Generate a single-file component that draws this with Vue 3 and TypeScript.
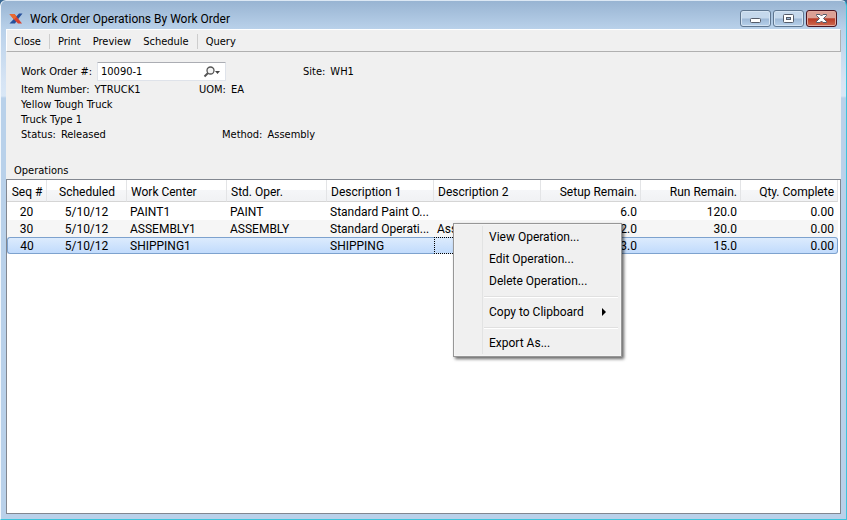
<script setup lang="ts">
import { ref } from 'vue'

interface Operation {
  seq: number
  scheduled: string
  workCenter: string
  stdOper: string
  description1: string
  description2: string
  setup: string
  run: string
  qty: string
}

const workOrder = ref('10090-1')
const selectedSeq = ref(40)

const toolGroups: string[][] = [['Close'], ['Print', 'Preview', 'Schedule'], ['Query']]
const menuGroups: string[][] = [
  ['View Operation...', 'Edit Operation...', 'Delete Operation...'],
  ['Copy to Clipboard'],
  ['Export As...'],
]

const operations: Operation[] = [
  { seq: 20, scheduled: '5/10/12', workCenter: 'PAINT1', stdOper: 'PAINT', description1: 'Standard Paint O...', description2: '', setup: '6.0', run: '120.0', qty: '0.00' },
  { seq: 30, scheduled: '5/10/12', workCenter: 'ASSEMBLY1', stdOper: 'ASSEMBLY', description1: 'Standard Operati...', description2: 'Assembly', setup: '2.0', run: '30.0', qty: '0.00' },
  { seq: 40, scheduled: '5/10/12', workCenter: 'SHIPPING1', stdOper: '', description1: 'SHIPPING', description2: '', setup: '3.0', run: '15.0', qty: '0.00' },
]
</script>

<template>
  <div class="window">
    <header class="titlebar">
      <svg class="logo" width="14" height="12" viewBox="0 0 14 12" aria-hidden="true">
        <path d="M13.500 0.500H10L0.500 10.500H6L8 7.500Z" fill="#27509b" />
        <path d="M0.500 1h5L13 10.500H9L5 6.500Z" fill="#d8432f" />
        <path d="M0.500 1h5L7.500 4 5 6.500Z" fill="#ea6a30" />
      </svg>
      <h1 class="title">Work Order Operations By Work Order</h1>
      <div class="controls">
        <button class="control" type="button" aria-label="Minimize">
          <svg width="13" height="13" viewBox="0 0 13 13"><rect x="1.500" y="6.500" width="10" height="4" rx="1" fill="#fff" stroke="#545b69" /></svg>
        </button>
        <button class="control" type="button" aria-label="Maximize">
          <svg width="13" height="13" viewBox="0 0 13 13"><rect x="1.500" y="2.500" width="10" height="8" rx="1" fill="#fff" stroke="#545b69" /><rect x="4.500" y="5.500" width="4" height="2" fill="#9db8d6" stroke="#545b69" /></svg>
        </button>
        <button class="control control-close" type="button" aria-label="Close window">
          <svg width="13" height="13" viewBox="0 0 13 13"><path d="M1.500 2.500h3.500l1.500 1.500 1.500-1.500h3.500v1L8.500 6.500l3 3v1H8L6.500 9 5 10.500H1.500v-1l3-3-3-3Z" fill="#fff" stroke="#545b69" /></svg>
        </button>
      </div>
    </header>

    <main class="client">
      <nav class="toolbar">
        <div v-for="group in toolGroups" :key="group[0]" class="tool-group">
          <button v-for="tool in group" :key="tool" type="button" class="tool">{{ tool }}</button>
        </div>
      </nav>

      <section class="details">
        <div class="line line-first">
          <div class="entry entry-order">
            <label for="work-order">Work Order #:</label>
            <div class="lookup">
              <input id="work-order" v-model="workOrder" type="text" />
              <button type="button" class="lookup-button" aria-label="Find work order">
                <svg width="18" height="12" viewBox="0 0 18 12">
                  <circle cx="7.500" cy="4.500" r="3.500" fill="#f4f4f4" stroke="#555" stroke-width="1.300" />
                  <path d="M5 7 1.500 10.500" stroke="#555" stroke-width="2" />
                  <path d="M12 5h5l-2.500 3Z" fill="#444" />
                </svg>
              </button>
            </div>
          </div>
          <div class="entry"><span>Site:</span><span>WH1</span></div>
        </div>
        <div class="line">
          <div class="entry entry-item"><span>Item Number:</span><span>YTRUCK1</span></div>
          <div class="entry"><span>UOM:</span><span>EA</span></div>
        </div>
        <div class="line">Yellow Tough Truck</div>
        <div class="line">Truck Type 1</div>
        <div class="line">
          <div class="entry entry-status"><span>Status:</span><span>Released</span></div>
          <div class="entry"><span>Method:</span><span>Assembly</span></div>
        </div>
      </section>

      <h2 class="list-title">Operations</h2>
      <div class="list">
        <table>
          <colgroup>
            <col class="w-seq" />
            <col class="w-date" />
            <col class="w-mid" />
            <col class="w-mid" />
            <col class="w-desc" />
            <col />
            <col class="w-mid" />
            <col class="w-mid" />
            <col class="w-qty" />
          </colgroup>
          <thead>
            <tr>
              <th class="center">Seq #</th>
              <th class="center">Scheduled</th>
              <th>Work Center</th>
              <th>Std. Oper.</th>
              <th>Description 1</th>
              <th>Description 2</th>
              <th class="right">Setup Remain.</th>
              <th class="right">Run Remain.</th>
              <th class="right">Qty. Complete</th>
            </tr>
          </thead>
          <tbody>
            <tr v-for="op in operations" :key="op.seq" :class="{ selected: op.seq === selectedSeq }" @click="selectedSeq = op.seq">
              <td class="center">{{ op.seq }}</td>
              <td class="center">{{ op.scheduled }}</td>
              <td>{{ op.workCenter }}</td>
              <td>{{ op.stdOper }}</td>
              <td>{{ op.description1 }}</td>
              <td class="focusable">{{ op.description2 }}</td>
              <td class="right">{{ op.setup }}</td>
              <td class="right">{{ op.run }}</td>
              <td class="right">{{ op.qty }}</td>
            </tr>
          </tbody>
        </table>
      </div>
    </main>

    <div class="menu" role="menu">
      <div v-for="group in menuGroups" :key="group[0]" class="menu-group">
        <button v-for="item in group" :key="item" type="button" role="menuitem" class="menu-item">
          <span>{{ item }}</span>
          <svg v-if="item === 'Copy to Clipboard'" width="4" height="8" viewBox="0 0 4 8"><path d="M0 0 4 4 0 8Z" fill="#000" /></svg>
        </button>
      </div>
    </div>
  </div>
</template>

<style>
body {
  margin: 0;
  background: #3b6a95;
}
</style>

<style scoped>
* {
  box-sizing: border-box;
}

button {
  margin: 0;
  padding: 0;
  border: 0;
  background: none;
  color: inherit;
  font: inherit;
}

svg {
  display: block;
}

.window {
  position: relative;
  display: flex;
  flex-direction: column;
  min-height: 100vh;
  padding: 0 5px 5px;
  border: 1px solid #3cc5dc;
  border-top-color: #dce8f4;
  border-left-color: #f2f7fc;
  border-radius: 6px 6px 0 0;
  background: linear-gradient(#98b4d2 0, #b9d1ea 28px, #d6e4f4 80px, #d9e7f6 95px, #b9d1ea 97px);
  color: #000;
  font: 12px/16px Roboto, "Open Sans", sans-serif;
}

.titlebar {
  display: flex;
  align-items: center;
  height: 28px;
  padding: 7px 4px 0 3px;
}

.logo {
  margin-right: 7px;
}

.title {
  flex: 1;
  margin: 0;
  font-size: 12px;
  font-weight: 400;
}

.controls {
  display: flex;
  gap: 2px;
}

.control {
  display: flex;
  align-items: center;
  justify-content: center;
  width: 31px;
  height: 17px;
  border: 1px solid #5f7690;
  border-radius: 3px;
  background: linear-gradient(#c5d8ec 0 48%, #9db8d6 52%, #b7d0ea);
  box-shadow: inset 0 0 0 1px #d5e4f3;
}

.control-close {
  border-color: #4b1421;
  background: linear-gradient(#dca095 0 45%, #b83a26 52%, #cf6b50);
  box-shadow: inset 0 0 0 1px #e2a99d;
}

.client {
  display: flex;
  flex: 1;
  flex-direction: column;
  background: #f0f0f0;
  font: 11px/15px "DejaVu Sans Condensed", "DejaVu Sans", sans-serif;
}

.toolbar {
  display: flex;
  align-items: center;
  height: 23px;
  padding: 1px 0 0 7px;
  border-top: 1px solid #fff;
  border-right: 1px solid #b0b0b0;
  border-bottom: 1px solid #b0b0b0;
  border-left: 1px solid #fff;
}

.tool-group {
  display: flex;
  gap: 12px;
}

.tool-group + .tool-group {
  margin-left: 8px;
  padding-left: 8px;
  border-left: 1px solid #cdcdcd;
}

.details {
  padding: 9px 14px 0 15px;
}

.line {
  display: flex;
  align-items: center;
  height: 15px;
}

.line-first {
  height: 21px;
}

.entry {
  display: flex;
  align-items: center;
  gap: 5px;
}

.entry-order {
  width: 282px;
}

.entry-item {
  width: 178px;
}

.entry-status {
  width: 201px;
}

.lookup {
  display: flex;
  align-items: center;
  width: 129px;
  height: 19px;
  padding: 0 4px 0 3px;
  border: 1px solid #dfe3ea;
  border-top-color: #abadb3;
  border-radius: 1px;
  background: #fff;
}

.lookup input {
  flex: 1;
  min-width: 0;
  padding: 0;
  border: 0;
  outline: 0;
  background: none;
  color: inherit;
  font: inherit;
}

.list-title {
  margin: 21px 0 0 8px;
  height: 16px;
  font-size: 11px;
  font-weight: 400;
}

.list {
  flex: 1;
  padding-right: 2px;
  border: 1px solid #828790;
  background: #fff;
  font: 12px/16px Roboto, "Open Sans", sans-serif;
}

table {
  width: 100%;
  border-collapse: separate;
  border-spacing: 0;
  table-layout: fixed;
}

.w-seq {
  width: 40px;
}

.w-date {
  width: 80px;
}

.w-mid {
  width: 100px;
}

.w-desc {
  width: 107px;
}

.w-qty {
  width: 97px;
}

th,
td {
  text-align: left;
  white-space: nowrap;
}

th {
  height: 22px;
  padding: 2px 3px 0 4px;
  border-right: 1px solid #e3e4e6;
  border-bottom: 1px solid #d5d5d5;
  background: linear-gradient(#fff 0 45%, #f5f6f8 50%, #f1f2f4);
  font-weight: 400;
}

td {
  height: 17px;
  padding: 1px 4px 0 3px;
  line-height: 14px;
}

.center {
  text-align: center;
}

.right {
  text-align: right;
}

tbody tr:first-child td {
  height: 18px;
  padding-top: 2px;
}

tbody tr:nth-child(even) td {
  background: #f6f6f6;
}

.selected td {
  border-top: 1px solid #7da2ce;
  border-bottom: 1px solid #7da2ce;
  background: linear-gradient(#dcebfd, #c1dbfc);
}

.selected td:first-child {
  border-left: 1px solid #7da2ce;
  border-radius: 3px 0 0 3px;
}

.selected td:last-child {
  padding-right: 3px;
  border-right: 1px solid #7da2ce;
  border-radius: 0 3px 3px 0;
}

.selected .focusable {
  border: 1px dotted #000;
}

.menu {
  position: absolute;
  top: 222px;
  left: 452px;
  width: 169px;
  padding: 2px;
  border: 1px solid #979797;
  background: linear-gradient(#e2e3e3, #e2e3e3) 28px 2px / 1px calc(100% - 4px) no-repeat, #f0f0f0;
  box-shadow: inset 0 0 0 1px #f5f5f5, 2px 2px 3px #0009;
}

.menu-group {
  display: flex;
  flex-direction: column;
}

.menu-group + .menu-group {
  padding-top: 9px;
  background: linear-gradient(#e0e0e0 50%, #fff 50%) 28px 4px / calc(100% - 29px) 2px no-repeat;
}

.menu-item {
  display: flex;
  align-items: center;
  justify-content: space-between;
  height: 22px;
  padding: 0 13px 0 33px;
}
</style>
